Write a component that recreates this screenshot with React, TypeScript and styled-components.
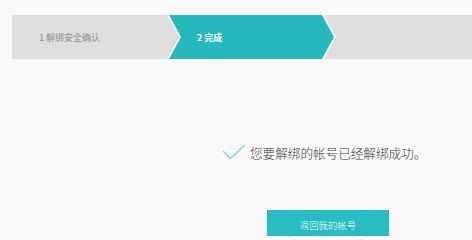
import React from 'react';
import styled, { createGlobalStyle } from 'styled-components';

const GlobalStyle = createGlobalStyle`
  html, body {
    margin: 0;
    padding: 0;
    background: #f9f9f9;
    overflow: hidden;
  }
  body {
    font-family: "Noto Sans CJK SC", "Noto Sans", sans-serif;
  }
`;

const Page = styled.div`
  width: 472px;
  height: 236px;
  overflow: hidden;
`;

const StepBar = styled.div`
  display: flex;
  padding: 15px 0 0 12px;
  width: 600px;
`;

const Step = styled.div<{ $active?: boolean; $first?: boolean; $w: number }>`
  flex: 0 0 ${(p) => p.$w}px;
  height: 44px;
  margin-left: ${(p) => (p.$first ? 0 : -10)}px;
  display: flex;
  align-items: center;
  padding-left: ${(p) => (p.$first ? 27 : 28)}px;
  box-sizing: border-box;
  background: ${(p) => (p.$active ? '#25b9bd' : '#dedede')};
  color: ${(p) => (p.$active ? '#ffffff' : '#8c8c8c')};
  font-size: 9px;
  font-weight: ${(p) => (p.$active ? 700 : 400)};
  white-space: pre;
  clip-path: ${(p) =>
    p.$first
      ? 'polygon(0 0, calc(100% - 12px) 0, 100% 50%, calc(100% - 12px) 100%, 0 100%)'
      : 'polygon(0 0, calc(100% - 12px) 0, 100% 50%, calc(100% - 12px) 100%, 0 100%, 12px 50%)'};
`;

const Message = styled.div`
  display: flex;
  align-items: center;
  gap: 4px;
  margin-top: 85px;
  padding-left: 222px;
  color: #3a3a3a;
  font-size: 12.6px;
  font-weight: 300;
  line-height: 18px;
`;

const Actions = styled.div`
  display: flex;
  padding-left: 267px;
  margin-top: 48px;
`;

const BackButton = styled.button`
  width: 122px;
  height: 30px;
  border: none;
  background: #28bdc2;
  color: #ffffff;
  font-family: "Noto Sans CJK SC", sans-serif;
  font-size: 9.4px;
  font-weight: 300;
  padding: 0;
  cursor: pointer;
`;

const Check = () => (
  <svg width="24" height="18" viewBox="0 0 24 18">
    <polyline
      points="1,7 8.5,14.5 23,1"
      fill="none"
      stroke="#86d5d8"
      strokeWidth="1.6"
    />
  </svg>
);

export default function App() {
  return (
    <Page>
      <GlobalStyle />
      <StepBar>
        <Step $first $w={167}>1 解绑安全确认</Step>
        <Step $active $w={165}>2 完成</Step>
        <Step $w={300} />
      </StepBar>
      <Message>
        <Check />
        <span>您要解绑的帐号已经解绑成功。</span>
      </Message>
      <Actions>
        <BackButton>返回我的帐号</BackButton>
      </Actions>
    </Page>
  );
}
